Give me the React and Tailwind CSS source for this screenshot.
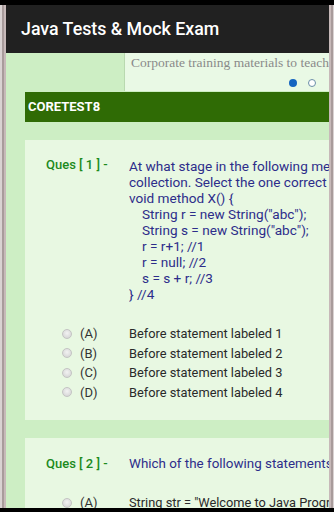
import React from "react";

const Radio = () => (
  <span className="inline-block w-[10px] h-[10px] rounded-full border border-[#c4c4c4] bg-[radial-gradient(circle_at_50%_40%,#f2f2f2,#d0d0d0)] shrink-0" />
);

const Option = ({ letter, text }) => (
  <div className="flex items-center h-[19.5px] pl-[37px]">
    <Radio />
    <span className="w-[49px] ml-[8px] shrink-0 text-[13px] text-[#333]">({letter})</span>
    <span className="text-[12.8px] text-[#2a2a2a] whitespace-nowrap">{text}</span>
  </div>
);

export default function App() {
  const font = { fontFamily: "Roboto, 'Liberation Sans', sans-serif" };
  const qLines = [
    ["At what stage in the following method does the object initially referenced by s", 0],
    ["collection. Select the one correct answer.", 0],
    ["void method X()  {", 0],
    ["String r = new String(\"abc\");", 1],
    ["String s = new String(\"abc\");", 1],
    ["r = r+1; //1", 1],
    ["r = null; //2", 1],
    ["s = s + r; //3", 1],
    ["} //4", 0],
  ];
  return (
    <div className="w-[334px] h-[512px] overflow-hidden flex flex-col bg-black" style={font}>
      <div className="h-[5px] bg-black shrink-0" />
      <div className="flex flex-1 min-h-0">
        <div className="w-[6px] flex shrink-0">
          <div className="w-[2px] bg-[#d9d2d2]" />
          <div className="w-[2px] bg-[#a89b9b]" />
          <div className="w-[2px] bg-[#c7b9b9]" />
        </div>
        <div className="flex-1 flex flex-col min-w-0 overflow-hidden">
          <div className="h-[48px] bg-[#212121] flex items-center pl-[15px] shrink-0">
            <span className="text-white text-[17.8px] font-medium">Java Tests &amp; Mock Exam</span>
          </div>
          <div className="flex-1 bg-[#cdeec4] flex flex-col min-h-0 overflow-hidden">
            <div className="flex h-[38px] shrink-0">
              <div className="w-[118px] shrink-0" />
              <div className="flex-1 min-w-0 bg-[#e9f9e5] border-l border-[#b9d9b0] flex flex-col overflow-hidden">
                <span
                  className="text-[#8a8a8a] whitespace-nowrap leading-[18px] mt-[1px] pl-[6px]"
                  style={{ fontFamily: "'Liberation Serif', 'DejaVu Serif', serif", fontSize: "13.5px" }}
                >
                  Corporate training materials to teach
                </span>
                <div className="flex items-center justify-end gap-[11px] mt-[7px] mr-[13px]">
                  <span className="w-[8px] h-[8px] rounded-full bg-[#1565c0]" />
                  <span className="w-[8px] h-[8px] rounded-full border border-[#6b8fa8] bg-white" />
                </div>
              </div>
            </div>
            <div className="h-[1px] shrink-0" />
            <div className="ml-[19px] h-[30px] bg-[#2f6b05] flex items-center pl-[3px] shrink-0">
              <span className="text-white text-[13px] font-bold">CORETEST8</span>
            </div>
            <div className="h-[18px] shrink-0" />
            <div className="ml-[19px] h-[280px] bg-[#e8f8e2] shrink-0 flex flex-col pt-[18px]">
              <div className="flex">
                <span className="w-[104px] shrink-0 pl-[21px] text-[13px] font-medium text-[#1c8a1c] leading-[16px] whitespace-nowrap -mt-[1px]">
                  Ques [ 1 ] -
                </span>
                <div className="flex-1 min-w-0 overflow-hidden text-[13.6px] text-[#2d2d8a] leading-[16px]">
                  {qLines.map(([t, ind], i) => (
                    <div key={i} className={"whitespace-nowrap " + (ind ? "pl-[13px]" : "")}>{t}</div>
                  ))}
                </div>
              </div>
              <div className="mt-[22px] flex flex-col">
                <Option letter="A" text="Before statement labeled 1" />
                <Option letter="B" text="Before statement labeled 2" />
                <Option letter="C" text="Before statement labeled 3" />
                <Option letter="D" text="Before statement labeled 4" />
              </div>
            </div>
            <div className="h-[18px] shrink-0" />
            <div className="ml-[19px] flex-1 bg-[#e8f8e2] flex flex-col pt-[18px] overflow-hidden">
              <div className="flex">
                <span className="w-[104px] shrink-0 pl-[21px] text-[13px] font-medium text-[#1c8a1c] leading-[16px] whitespace-nowrap">
                  Ques [ 2 ] -
                </span>
                <div className="flex-1 min-w-0 overflow-hidden text-[13.4px] text-[#2d2d8a] leading-[16px]">
                  <div className="whitespace-nowrap">Which of the following statements are correct?</div>
                </div>
              </div>
              <div className="mt-[21px] flex flex-col">
                <Option letter="A" text={'String str = "Welcome to Java Programming";'} />
              </div>
            </div>
          </div>
        </div>
        <div className="w-[5px] flex shrink-0">
          <div className="w-[2px] bg-[#c7b9b9]" />
          <div className="w-[2px] bg-[#a89b9b]" />
          <div className="w-[1px] bg-[#d9d2d2]" />
        </div>
      </div>
      <div className="h-[4px] bg-black shrink-0" />
    </div>
  );
}
